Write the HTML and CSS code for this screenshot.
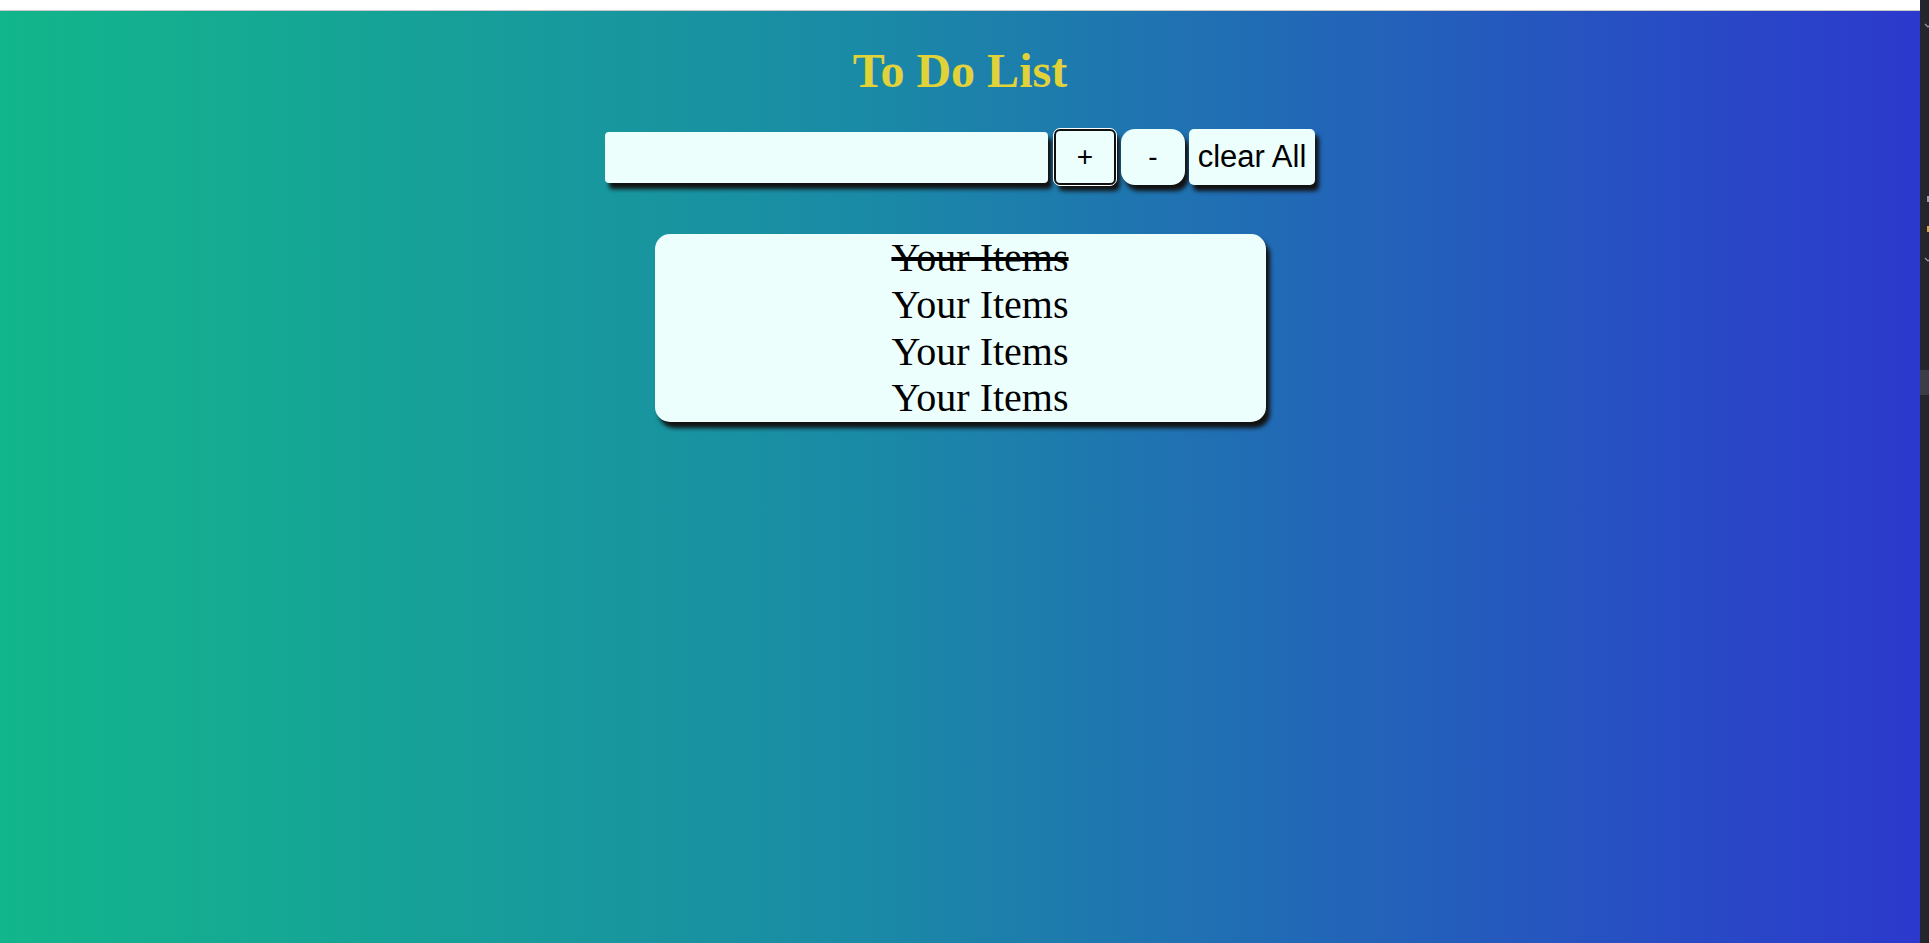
FILE: index.html
```html
<!DOCTYPE html>
<html lang="en">
<head>
<meta charset="utf-8">
<title>To Do List</title>
<link rel="stylesheet" href="styles.css">
</head>
<body>
<div class="frame">
  <div class="viewport">
    <div class="topbar"></div>
    <main class="page">
      <h1 class="title">To Do List</h1>
      <div class="controls">
        <input class="entry" type="text">
        <button class="btn btn-add">+</button>
        <button class="btn btn-remove">-</button>
        <button class="btn btn-clear">clear All</button>
      </div>
      <ul class="items">
        <li class="item done">Your Items</li>
        <li class="item">Your Items</li>
        <li class="item">Your Items</li>
        <li class="item">Your Items</li>
      </ul>
    </main>
  </div>
  <aside class="side">
    <svg class="mark mark-1" width="9" height="8" viewBox="0 0 9 8"><path d="M5 2 L8 5 L9 4" stroke="#9aa0a8" stroke-width="1.2" fill="none"/></svg>
    <span class="dot dot-1"></span>
    <span class="dot dot-2"></span>
    <svg class="mark mark-2" width="9" height="8" viewBox="0 0 9 8"><path d="M5 2 L8 5 L9 4" stroke="#9aa0a8" stroke-width="1.2" fill="none"/></svg>
    <span class="thumb"></span>
  </aside>
</div>
</body>
</html>
```

FILE: styles.css
```css
html, body {
  margin: 0;
  padding: 0;
  height: 100%;
}

body {
  font-family: "Liberation Serif", "Times New Roman", serif;
  overflow: hidden;
}

.frame {
  display: flex;
  height: 943px;
}

.viewport {
  flex: 1;
  display: flex;
  flex-direction: column;
}

.topbar {
  height: 10px;
  background: #ffffff;
  border-bottom: 1px solid #c9c9c9;
}

.page {
  flex: 1;
  background: linear-gradient(to right, #12b68b 0%, #1a8aa6 45%, #2c39cd 100%);
  display: flex;
  flex-direction: column;
  align-items: center;
}

.title {
  font-family: "Liberation Serif", "Times New Roman", serif;
  font-weight: bold;
  font-size: 48px;
  color: #e1d23a;
  margin: 33px 0 32px;
  line-height: 53px;
}

.controls {
  display: flex;
  align-items: center;
  gap: 4px;
}

.entry {
  box-sizing: border-box;
  width: 443px;
  height: 51px;
  border: none;
  border-radius: 4px;
  background: #ecfffd;
  box-shadow: 4px 6px 4px #121212;
  margin-right: 1px;
  padding: 0 8px;
  font-size: 24px;
  outline: none;
}

.btn {
  box-sizing: border-box;
  height: 56px;
  border: none;
  background: #ecfffd;
  box-shadow: 4px 6px 4px #121212;
  font-family: "Liberation Sans", Arial, sans-serif;
  font-size: 31px;
  color: #000;
  padding: 0 8px;
}

.btn-add {
  width: 62px;
  font-size: 28px;
  border: 2px solid #101010;
  border-radius: 6px;
  outline: 1px solid #ffffff;
  margin: 0 1px;
}

.btn-remove {
  width: 64px;
  border-radius: 14px;
  font-size: 28px;
}

.btn-clear {
  width: 126px;
  border-radius: 5px;
}

.items {
  box-sizing: border-box;
  width: 611px;
  margin: 49px 0 0;
  padding: 1px 0 0 40px;
  list-style: none;
  background: #ecfffd;
  border-radius: 15px;
  box-shadow: 4px 6px 4px #121212;
  text-align: center;
}

.item {
  font-family: "Liberation Serif", "Times New Roman", serif;
  font-size: 40px;
  line-height: 46.75px;
  color: #000;
}

.done {
  text-decoration: line-through;
  text-decoration-thickness: 4px;
}

.side {
  width: 9px;
  background: #23262d;
  position: relative;
}

.mark {
  position: absolute;
  left: 0;
}

.mark-1 { top: 22px; }
.mark-2 { top: 256px; }

.dot {
  position: absolute;
  left: 7px;
  width: 2px;
  height: 6px;
}

.dot-1 { top: 196px; background: #9aa0a8; }
.dot-2 { top: 226px; background: #d9a640; }

.thumb {
  position: absolute;
  left: 0;
  top: 370px;
  width: 9px;
  height: 25px;
  background: #3b3e46;
}
```
